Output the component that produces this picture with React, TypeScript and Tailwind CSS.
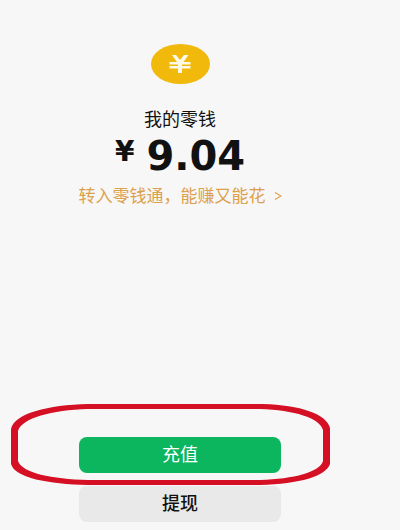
const CoinIcon = () => (
  <svg className="h-10 w-[59px]" viewBox="0 0 59 40" aria-hidden="true">
    <ellipse cx="29.5" cy="20" rx="29.5" ry="20" fill="#f2b90d" />
    <path
      d="M21 11H25L29 16L33 11H37.5L32.5 18H39.5V20.5H31V22H39.5V24.5H31V29H27V24.5H18.5V22H27V20.5H18.5V18H26Z"
      fill="#fffbe8"
    />
  </svg>
);

const HighlightRing = () => (
  <svg
    className="pointer-events-none absolute -inset-x-[69px] -top-[33px] h-[81px] w-[calc(100%+118px)]"
    viewBox="0 0 320 81"
    preserveAspectRatio="none"
    aria-hidden="true"
  >
    <path
      fill="#d51025"
      fillRule="evenodd"
      d="M78 0H253C290 1 317 10 320 24V60C316 72 290 80 250 81H78C38 80 5 74 1 60V25C5 9 38 1 78 0ZM78 5C42 6 12 14 8 27V57C12 69 42 75 78 76H250C284 75 310 68 313 57V26C310 14 284 6 250 5Z"
    />
  </svg>
);

const App = () => {
  return (
    <main className="flex min-h-screen flex-col items-center bg-[#f7f7f7] pt-11 pr-10 pb-2 font-['Roboto','Noto_Sans_CJK_SC',sans-serif] text-[#111111]">
      <CoinIcon />
      <h1 className="mt-6 text-lg leading-6 font-normal">我的零钱</h1>
      <p className="mt-1 flex items-start gap-3 font-['DejaVu_Sans',sans-serif] font-bold">
        <span className="text-[28px] leading-8">¥</span>
        <span className="text-[40px] leading-10">9.04</span>
      </p>
      <a
        href="#lqt"
        className="mt-2 flex items-center gap-2 text-[17px] leading-6 whitespace-nowrap text-[#dda04c]"
      >
        转入零钱通，能赚又能花
        <svg className="h-2 w-2" viewBox="0 0 8 8" fill="none" aria-hidden="true">
          <path d="M1 0.5L7 4L1 7.5" stroke="currentColor" strokeWidth="1.2" />
        </svg>
      </a>
      <div className="mt-auto flex w-full flex-col gap-[13px] pr-[79px] pl-[79px]">
        <div className="relative">
          <button
            type="button"
            className="h-9 w-full rounded-lg bg-[#0bb65e] text-lg leading-6 text-white"
          >
            充值
          </button>
          <HighlightRing />
        </div>
        <button
          type="button"
          className="h-9 w-full rounded-lg bg-[#e9e9e9] text-lg leading-6 font-medium"
        >
          提现
        </button>
      </div>
    </main>
  );
};

export default App;
